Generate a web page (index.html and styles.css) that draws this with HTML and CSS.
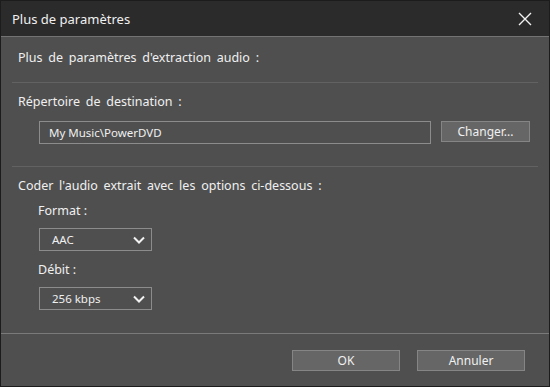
FILE: index.html
```html
<!DOCTYPE html>
<html lang="fr">
<head>
    <meta charset="UTF-8">
    <title>Plus de paramètres</title>
    <link rel="stylesheet" href="styles.css">
</head>
<body>

<div class="dialog">
    <!-- Barre de titre -->
    <div class="titlebar">
        <span class="title">Plus de paramètres</span>
        <button class="close" aria-label="Fermer">
            <svg width="14" height="14" viewBox="0 0 14 14">
                <path d="M1 1 L13 13 M13 1 L1 13" stroke="#f2f2f2" stroke-width="1.4" fill="none"/>
            </svg>
        </button>
    </div>

    <div class="body">
        <div class="section first">
            <p class="label">Plus de paramètres d'extraction audio :</p>
        </div>

        <div class="section">
            <p class="label">Répertoire de destination :</p>
            <div class="path-row">
                <div class="field">My Music\PowerDVD</div>
                <button class="btn change">Changer...</button>
            </div>
        </div>

        <div class="section last">
            <p class="label">Coder l'audio extrait avec les options ci-dessous :</p>
            <p class="sublabel">Format :</p>
            <div class="select">
                <span>AAC</span>
                <svg width="12" height="8" viewBox="0 0 12 8">
                    <path d="M1 1.5 L6 6.5 L11 1.5" stroke="#f2f2f2" stroke-width="2" fill="none"/>
                </svg>
            </div>
            <p class="sublabel">Débit :</p>
            <div class="select">
                <span>256 kbps</span>
                <svg width="12" height="8" viewBox="0 0 12 8">
                    <path d="M1 1.5 L6 6.5 L11 1.5" stroke="#f2f2f2" stroke-width="2" fill="none"/>
                </svg>
            </div>
        </div>
    </div>

    <!-- Boutons du bas -->
    <div class="footer">
        <button class="btn action">OK</button>
        <button class="btn action">Annuler</button>
    </div>
</div>

</body>
</html>
```

FILE: styles.css
```css
body {
    margin: 0;
    padding: 0;
    background-color: #1c1c1c;
    font-family: 'Noto Sans', 'Open Sans', sans-serif;
    font-size: 12.5px;
    color: #f0f0f0;
}

.dialog {
    width: 548px;
    height: 385px;
    border: 1px solid #1c1c1c;
    background-color: #4f4f4f;
    display: flex;
    flex-direction: column;
}

.titlebar {
    height: 35px;
    background-color: #2b2b2b;
    border-bottom: 1px solid #737373;
    display: flex;
    align-items: center;
    justify-content: space-between;
    padding-left: 11px;
}

.title {
    font-size: 13px;
}

.close {
    background: none;
    border: none;
    width: 40px;
    height: 35px;
    display: flex;
    align-items: center;
    justify-content: center;
    padding: 0;
    margin-right: 4px;
}

.body {
    flex: 1;
    padding: 0 11px;
}

.label {
    margin: 0;
    line-height: 17px;
    word-spacing: 2.5px;
}

.section {
    border-bottom: 1px solid #626262;
    padding: 10px 6px 22px;
}

.section.first {
    padding-top: 12px;
    padding-bottom: 16px;
}

.section.last {
    border-bottom: none;
    padding-top: 10px;
    padding-bottom: 0;
}

.path-row {
    display: flex;
    align-items: flex-start;
    margin-top: 11px;
    padding-left: 21px;
    gap: 10px;
}

.field {
    width: 381px;
    height: 21px;
    border: 1px solid #8c8c8c;
    padding-left: 9px;
    line-height: 21px;
    font-size: 11.5px;
}

.btn {
    font-family: 'Noto Sans', 'Open Sans', sans-serif;
    font-size: 12px;
    color: #f0f0f0;
    background-color: #666666;
    border: 1px solid #858585;
    padding: 0;
    cursor: pointer;
}

.change {
    width: 89px;
    height: 21px;
    line-height: 18px;
}

.sublabel {
    margin: 8px 0 0 20px;
    line-height: 17px;
}

.select {
    width: 93px;
    height: 21px;
    margin: 9px 0 10px 21px;
    border: 1px solid #8c8c8c;
    display: flex;
    align-items: center;
    justify-content: space-between;
    padding: 0 6px 0 12px;
    font-size: 11.5px;
}

.sublabel + .select + .sublabel {
    margin-top: 0;
}

.footer {
    height: 52px;
    border-top: 1px solid #7a7a7a;
    display: flex;
    justify-content: flex-end;
    align-items: center;
    gap: 17px;
    padding-right: 24px;
}

.action {
    width: 108px;
    height: 21px;
}
```
